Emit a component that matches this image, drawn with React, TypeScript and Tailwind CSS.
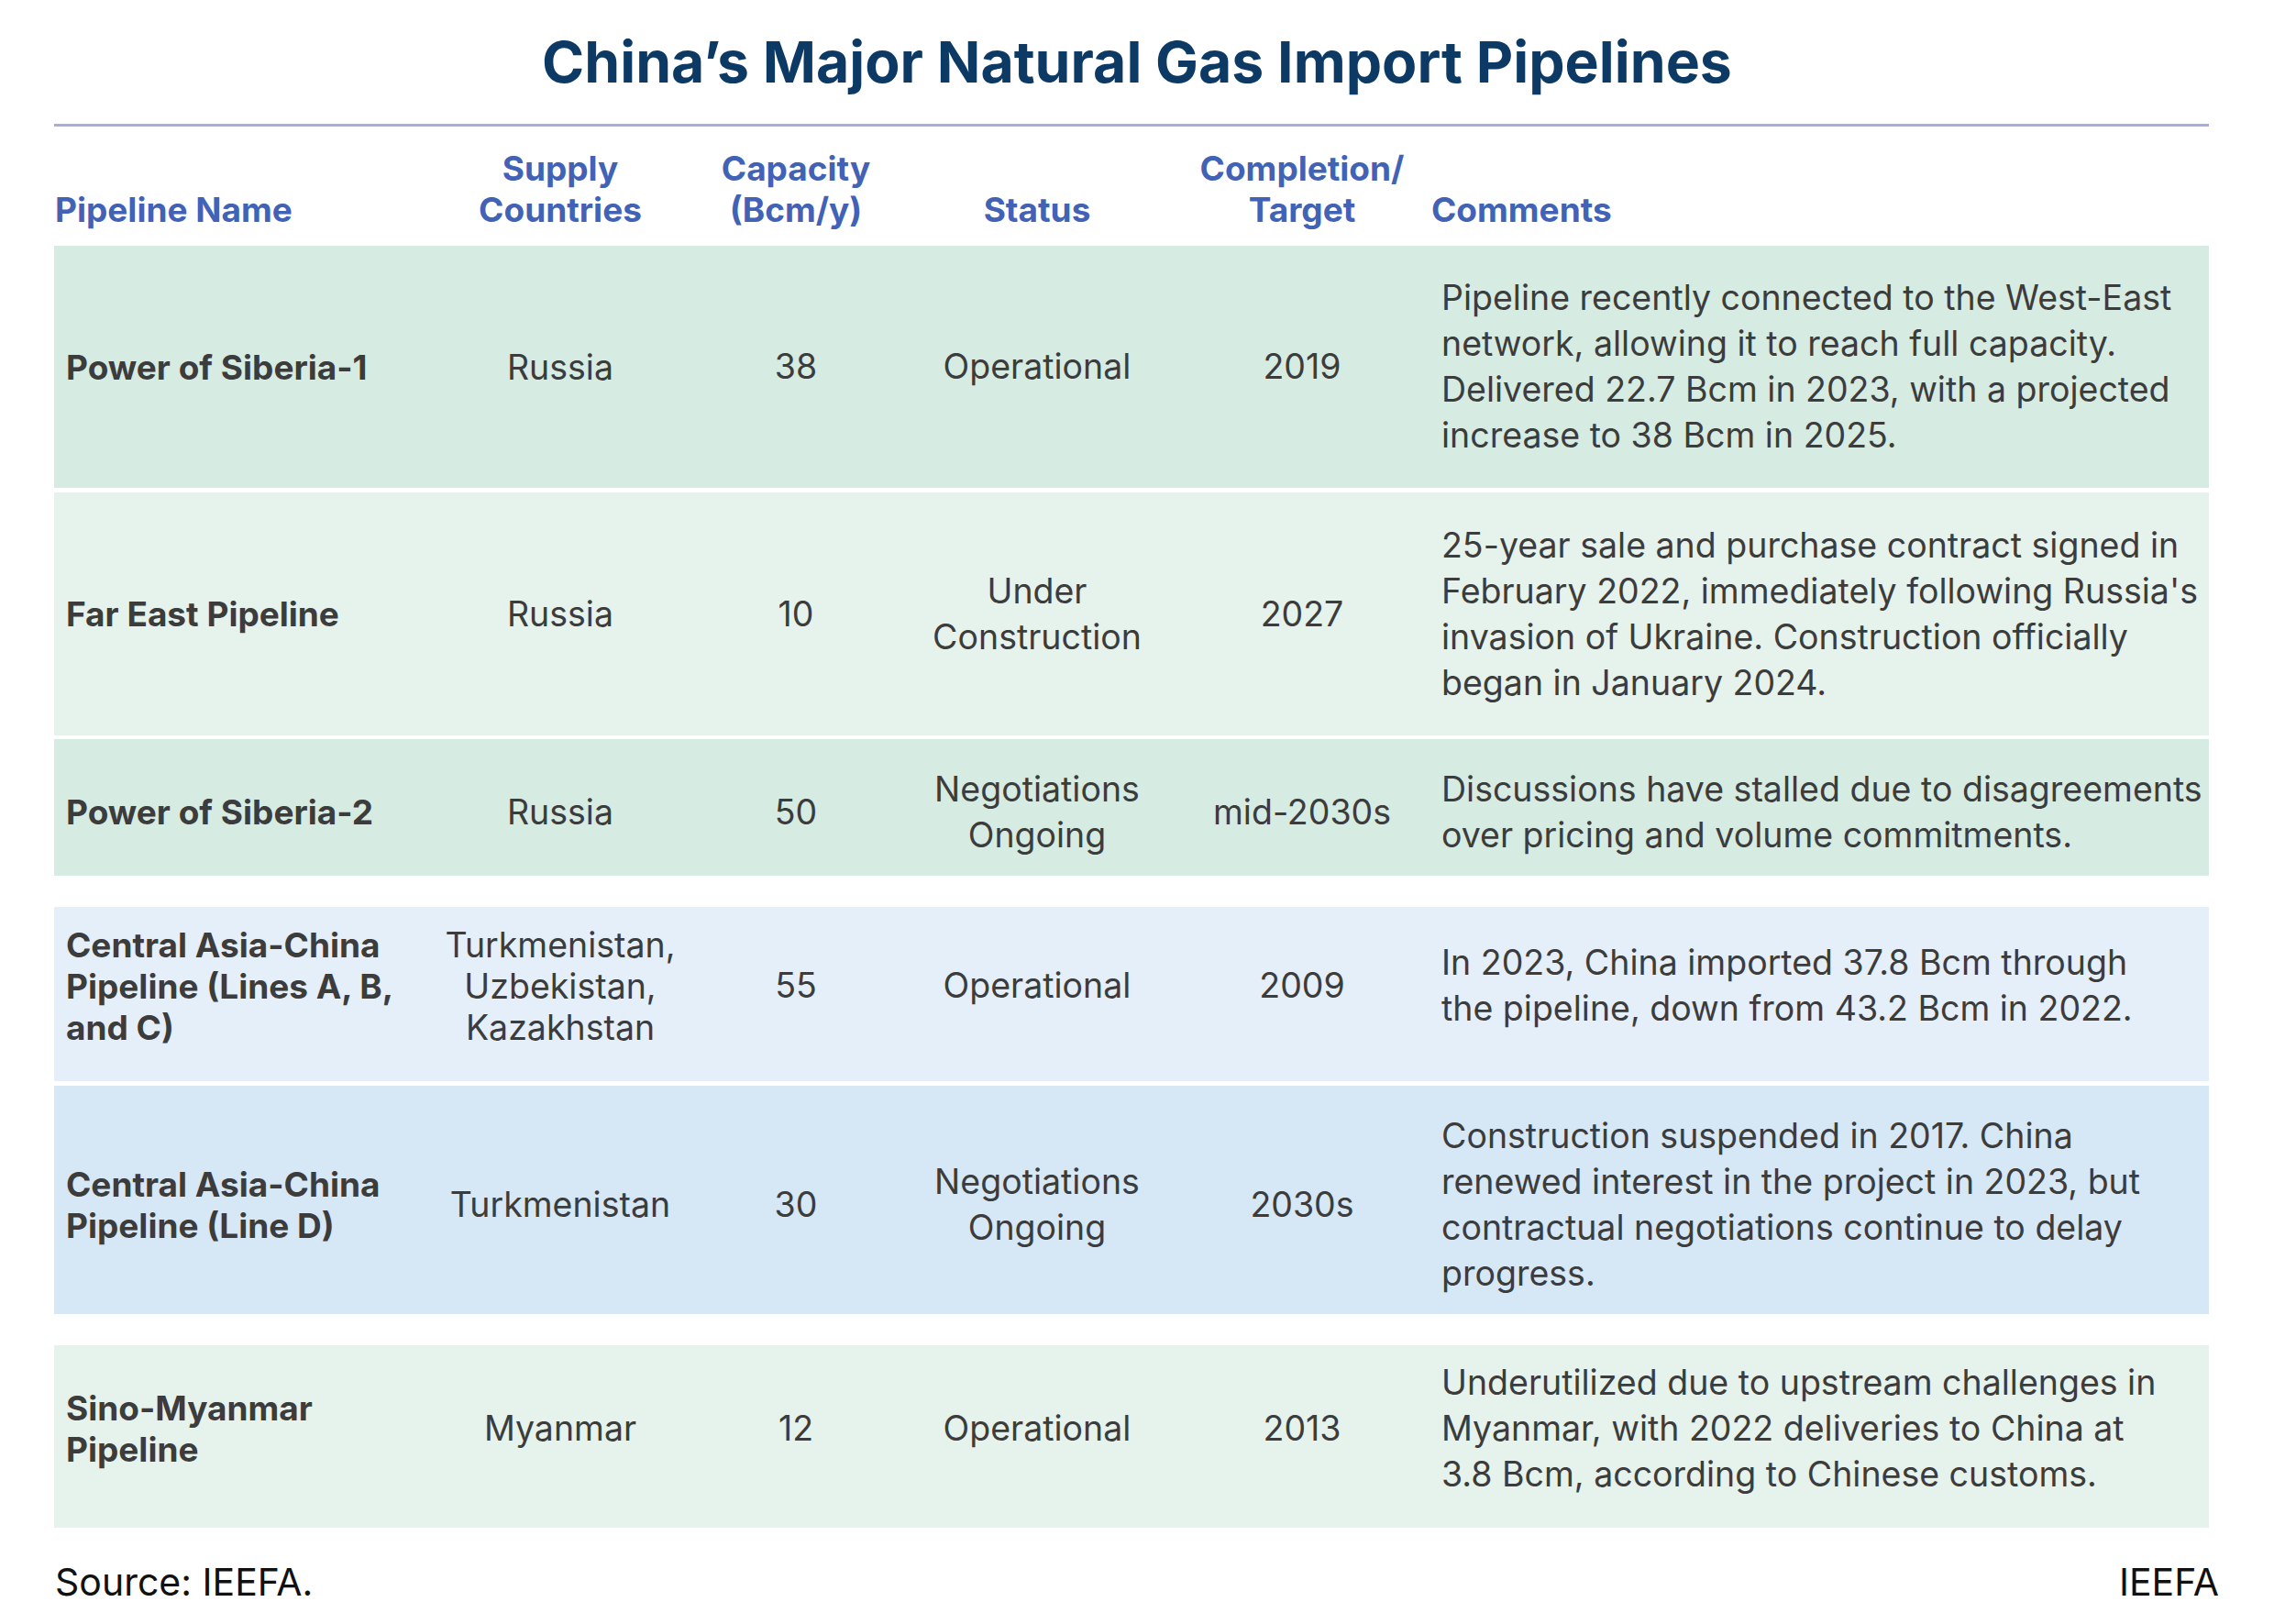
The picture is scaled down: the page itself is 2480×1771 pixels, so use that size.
import React from 'react';

type Row = {
  name: string[];
  countries: string[];
  capacity: string;
  status: string[];
  target: string;
  comments: string[];
  bg: string;
  height: string;
  gap: string;
  shift: string;
};

// column widths: name / supply / capacity / status / target / comments
const COLS = 'grid grid-cols-[409px_286px_228px_298px_280px_849px]';

const rows: Row[] = [
  {
    name: ['Power of Siberia-1'],
    countries: ['Russia'],
    capacity: '38',
    status: ['Operational'],
    target: '2019',
    comments: [
      'Pipeline recently connected to the West-East',
      'network, allowing it to reach full capacity.',
      'Delivered 22.7 Bcm in 2023, with a projected',
      'increase to 38 Bcm in 2025.',
    ],
    bg: 'bg-[#d6ebe2]',
    height: 'h-[264px]',
    gap: '',
    shift: '',
  },
  {
    name: ['Far East Pipeline'],
    countries: ['Russia'],
    capacity: '10',
    status: ['Under', 'Construction'],
    target: '2027',
    comments: [
      '25-year sale and purchase contract signed in',
      "February 2022, immediately following Russia's",
      'invasion of Ukraine. Construction officially',
      'began in January 2024.',
    ],
    bg: 'bg-[#e6f2ec]',
    height: 'h-[265px]',
    gap: 'mt-[5px]',
    shift: '',
  },
  {
    name: ['Power of Siberia-2'],
    countries: ['Russia'],
    capacity: '50',
    status: ['Negotiations', 'Ongoing'],
    target: 'mid-2030s',
    comments: [
      'Discussions have stalled due to disagreements',
      'over pricing and volume commitments.',
    ],
    bg: 'bg-[#d6ebe2]',
    height: 'h-[149px]',
    gap: 'mt-[4px]',
    shift: 'pt-[10px]',
  },
  {
    name: ['Central Asia-China', 'Pipeline (Lines A, B,', 'and C)'],
    countries: ['Turkmenistan,', 'Uzbekistan,', 'Kazakhstan'],
    capacity: '55',
    status: ['Operational'],
    target: '2009',
    comments: [
      'In 2023, China imported 37.8 Bcm through',
      'the pipeline, down from 43.2 Bcm in 2022.',
    ],
    bg: 'bg-[#e5eff9]',
    height: 'h-[190px]',
    gap: 'mt-[34px]',
    shift: 'pb-[18px]',
  },
  {
    name: ['Central Asia-China', 'Pipeline (Line D)'],
    countries: ['Turkmenistan'],
    capacity: '30',
    status: ['Negotiations', 'Ongoing'],
    target: '2030s',
    comments: [
      'Construction suspended in 2017. China',
      'renewed interest in the project in 2023, but',
      'contractual negotiations continue to delay',
      'progress.',
    ],
    bg: 'bg-[#d6e7f6]',
    height: 'h-[249px]',
    gap: 'mt-[5px]',
    shift: 'pt-[10px]',
  },
  {
    name: ['Sino-Myanmar', 'Pipeline'],
    countries: ['Myanmar'],
    capacity: '12',
    status: ['Operational'],
    target: '2013',
    comments: [
      'Underutilized due to upstream challenges in',
      'Myanmar, with 2022 deliveries to China at',
      '3.8 Bcm, according to Chinese customs.',
    ],
    bg: 'bg-[#e6f2ec]',
    height: 'h-[199px]',
    gap: 'mt-[34px]',
    shift: 'pb-[18px]',
  },
];

const Lines = ({ lines }: { lines: string[] }) => (
  <>
    {lines.map((l, i) => (
      <div key={i} className="whitespace-nowrap">
        {l}
      </div>
    ))}
  </>
);

const App = () => {
  return (
    <div
      className="w-[2480px] h-[1771px] bg-white pt-[36px]"
      style={{ fontFamily: 'Inter, "Noto Sans", sans-serif' }}
    >
      {/* TITLE */}
      <h1 className="text-center text-[62.5px] leading-[62px] font-bold text-[#0d3a65]">
        China’s Major Natural Gas Import Pipelines
      </h1>

      <div className="ml-[59px] w-[2350px]">
        <div className="mt-[37px] h-[3px] bg-[#a8aedb]" />

        {/* HEADER */}
        <div
          className={`${COLS} h-[130px] items-end pb-[17px] text-[37px] leading-[45px] font-bold text-[#4262b5]`}
        >
          <div className="pl-px">Pipeline Name</div>
          <div className="text-center">
            <Lines lines={['Supply', 'Countries']} />
          </div>
          <div className="text-center">
            <Lines lines={['Capacity', '(Bcm/y)']} />
          </div>
          <div className="text-center">Status</div>
          <div className="text-center">
            <Lines lines={['Completion/', 'Target']} />
          </div>
          <div className="pl-px">Comments</div>
        </div>

        {/* ROWS */}
        {rows.map((row, idx) => (
          <div
            key={idx}
            className={`${COLS} items-center text-[37.5px] text-[#3c3c3c] ${row.bg} ${row.height} ${row.gap} ${row.shift}`}
          >
            <div className="pl-[13px] font-bold text-[37px] leading-[45px]">
              <Lines lines={row.name} />
            </div>
            <div className="text-center leading-[45px]">
              <Lines lines={row.countries} />
            </div>
            <div className="text-center leading-[50px]">{row.capacity}</div>
            <div className="text-center leading-[50px]">
              <Lines lines={row.status} />
            </div>
            <div className="text-center leading-[50px]">{row.target}</div>
            <div className="pl-[12px] leading-[50px]">
              <Lines lines={row.comments} />
            </div>
          </div>
        ))}
      </div>

      {/* FOOTER */}
      <div className="mt-[35px] flex justify-between px-[60px] text-[41px] leading-[48px] text-[#111]">
        <span>Source: IEEFA.</span>
        <span>IEEFA</span>
      </div>
    </div>
  );
};

export default App;
